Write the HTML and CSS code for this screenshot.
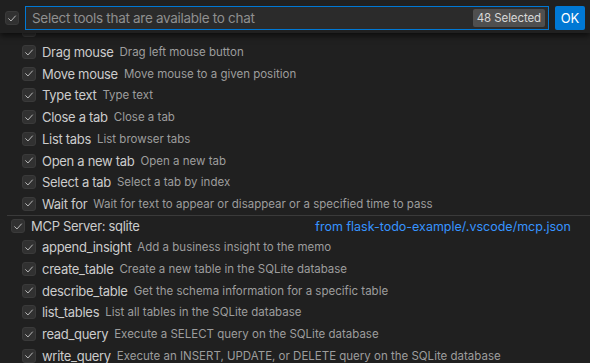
FILE: index.html
```html
<!DOCTYPE html>
<html>
<head>
<meta charset="utf-8">
<link rel="stylesheet" href="styles.css">
</head>
<body>
<div class="widget">
  <div class="header">
    <span class="cb cb-head"><svg viewBox="0 0 16 16"><path d="M3.5 8.2 L6.6 11.3 L12.6 4.6" /></svg></span>
    <div class="input">
      <span class="placeholder">Select tools that are available to chat</span>
      <span class="badge">48 Selected</span>
    </div>
    <button class="ok">OK</button>
  </div>
  <div class="list">
    <div class="scroll">
      <div class="row child"><span class="cb"><svg viewBox="0 0 16 16"><path d="M3.5 8.2 L6.6 11.3 L12.6 4.6" /></svg></span></div>
      <div class="row child"><span class="cb"><svg viewBox="0 0 16 16"><path d="M3.5 8.2 L6.6 11.3 L12.6 4.6" /></svg></span><span class="label">Drag mouse</span><span class="desc">Drag left mouse button</span></div>
      <div class="row child"><span class="cb"><svg viewBox="0 0 16 16"><path d="M3.5 8.2 L6.6 11.3 L12.6 4.6" /></svg></span><span class="label">Move mouse</span><span class="desc">Move mouse to a given position</span></div>
      <div class="row child"><span class="cb"><svg viewBox="0 0 16 16"><path d="M3.5 8.2 L6.6 11.3 L12.6 4.6" /></svg></span><span class="label">Type text</span><span class="desc">Type text</span></div>
      <div class="row child"><span class="cb"><svg viewBox="0 0 16 16"><path d="M3.5 8.2 L6.6 11.3 L12.6 4.6" /></svg></span><span class="label">Close a tab</span><span class="desc">Close a tab</span></div>
      <div class="row child"><span class="cb"><svg viewBox="0 0 16 16"><path d="M3.5 8.2 L6.6 11.3 L12.6 4.6" /></svg></span><span class="label">List tabs</span><span class="desc">List browser tabs</span></div>
      <div class="row child"><span class="cb"><svg viewBox="0 0 16 16"><path d="M3.5 8.2 L6.6 11.3 L12.6 4.6" /></svg></span><span class="label">Open a new tab</span><span class="desc">Open a new tab</span></div>
      <div class="row child"><span class="cb"><svg viewBox="0 0 16 16"><path d="M3.5 8.2 L6.6 11.3 L12.6 4.6" /></svg></span><span class="label">Select a tab</span><span class="desc">Select a tab by index</span></div>
      <div class="row child"><span class="cb"><svg viewBox="0 0 16 16"><path d="M3.5 8.2 L6.6 11.3 L12.6 4.6" /></svg></span><span class="label">Wait for</span><span class="desc">Wait for text to appear or disappear or a specified time to pass</span></div>
      <div class="row group"><span class="cb"><svg viewBox="0 0 16 16"><path d="M3.5 8.2 L6.6 11.3 L12.6 4.6" /></svg></span><span class="label">MCP Server: sqlite</span><span class="source">from flask-todo-example/.vscode/mcp.json</span></div>
      <div class="row child"><span class="cb"><svg viewBox="0 0 16 16"><path d="M3.5 8.2 L6.6 11.3 L12.6 4.6" /></svg></span><span class="label">append_insight</span><span class="desc">Add a business insight to the memo</span></div>
      <div class="row child"><span class="cb"><svg viewBox="0 0 16 16"><path d="M3.5 8.2 L6.6 11.3 L12.6 4.6" /></svg></span><span class="label">create_table</span><span class="desc">Create a new table in the SQLite database</span></div>
      <div class="row child"><span class="cb"><svg viewBox="0 0 16 16"><path d="M3.5 8.2 L6.6 11.3 L12.6 4.6" /></svg></span><span class="label">describe_table</span><span class="desc">Get the schema information for a specific table</span></div>
      <div class="row child"><span class="cb"><svg viewBox="0 0 16 16"><path d="M3.5 8.2 L6.6 11.3 L12.6 4.6" /></svg></span><span class="label">list_tables</span><span class="desc">List all tables in the SQLite database</span></div>
      <div class="row child"><span class="cb"><svg viewBox="0 0 16 16"><path d="M3.5 8.2 L6.6 11.3 L12.6 4.6" /></svg></span><span class="label">read_query</span><span class="desc">Execute a SELECT query on the SQLite database</span></div>
      <div class="row child"><span class="cb"><svg viewBox="0 0 16 16"><path d="M3.5 8.2 L6.6 11.3 L12.6 4.6" /></svg></span><span class="label">write_query</span><span class="desc">Execute an INSERT, UPDATE, or DELETE query on the SQLite database</span></div>
    </div>
  </div>
</div>
</body>
</html>
```

FILE: styles.css
```css
* { box-sizing: border-box; }
html, body {
  margin: 0;
  padding: 0;
  background: #202020;
  width: 590px;
  height: 363px;
  overflow: hidden;
  font-family: Inter, "Noto Sans", sans-serif;
  color: #cccccc;
}
.widget {
  position: relative;
  width: 590px;
  height: 363px;
  display: flex;
  flex-direction: column;
}
.header {
  position: relative;
  z-index: 2;
  height: 33px;
  display: flex;
  align-items: flex-start;
  gap: 6px;
  padding: 6px 5px 0 5px;
  background: #202020;
  box-shadow: 0 3px 6px rgba(0,0,0,0.6);
}
.cb {
  flex: none;
  width: 14px;
  height: 14px;
  border-radius: 3px;
  background: #313131;
  border: 1px solid #3a3a3a;
  display: flex;
  align-items: center;
  justify-content: center;
}
.cb svg {
  width: 13px;
  height: 13px;
  fill: none;
  stroke: #c8c8c8;
  stroke-width: 1.2;
  stroke-linecap: round;
  stroke-linejoin: round;
}
.cb-head { margin-top: 5px; }
.input {
  flex: 1;
  height: 24px;
  border: 1px solid #0078d4;
  background: #2b2b2b;
  display: flex;
  align-items: center;
  padding: 0 3px 0 6px;
}
.placeholder {
  flex: 1;
  font-size: 13.5px;
  letter-spacing: -0.3px;
  color: #8f8f8f;
  white-space: nowrap;
}
.badge {
  background: #4f4f4f;
  color: #d8d8d8;
  font-size: 11.5px;
  letter-spacing: -0.1px;
  padding: 1px 4px;
  border-radius: 2px;
  line-height: 16px;
}
.ok {
  width: 30px;
  height: 24px;
  border: none;
  border-radius: 2px;
  background: #0078d4;
  color: #ffffff;
  font-family: inherit;
  font-size: 13px;
  padding: 0;
}
.list {
  flex: 1;
  overflow: hidden;
}
.scroll {
  margin-top: -13.5px;
}
.row {
  height: 21.71px;
  display: flex;
  align-items: center;
  white-space: nowrap;
}
.row.child { padding-left: 22px; }
.row.group {
  margin-left: 7px;
  padding-left: 4px;
  padding-right: 19px;
  border-top: 1px solid #3a3a3a;
}
.cb + .label { margin-left: 6px; }
.label {
  font-size: 13px;
  letter-spacing: -0.3px;
  color: #cccccc;
}
.desc {
  font-size: 11.5px;
  color: #9d9d9d;
  margin-left: 6px;
}
.source {
  margin-left: auto;
  font-size: 12.5px;
  color: #3794ff;
}
```
